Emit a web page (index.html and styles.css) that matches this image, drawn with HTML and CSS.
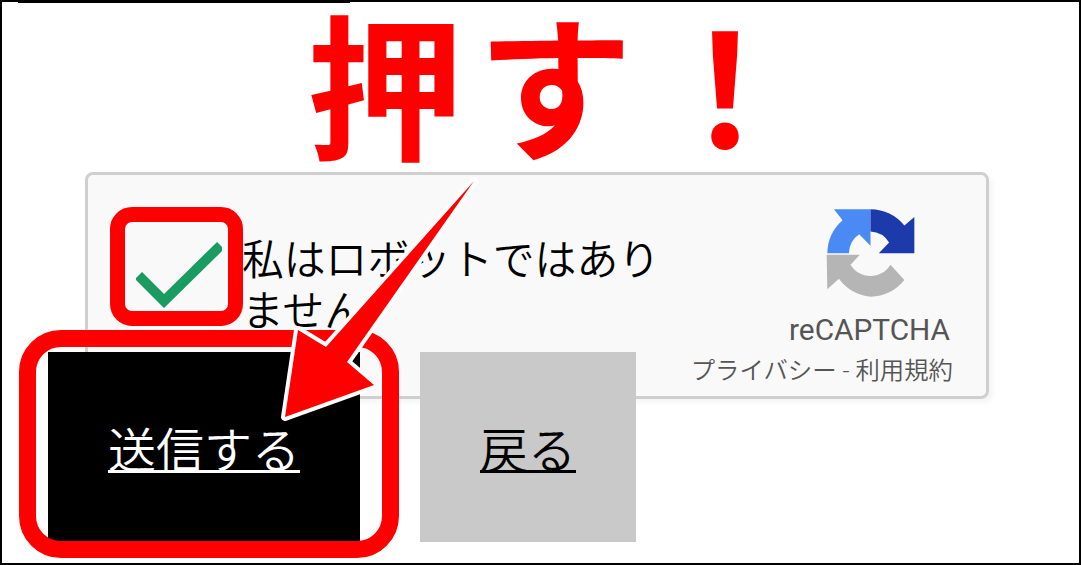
FILE: index.html
```html
<!DOCTYPE html>
<html lang="ja">
<head>
<meta charset="utf-8">
<title>reCAPTCHA</title>
<link rel="stylesheet" href="styles.css">
</head>
<body>
<main class="frame">
  <div class="top-rule"></div>
  <section class="card">
    <svg class="check" viewBox="0 0 86 68"><path d="M6 39 L28 61 L81 9" /></svg>
    <p class="label">私はロボットではありません</p>
    <div class="brand">
      <svg class="logo" viewBox="70 45 280 280">
        <path class="logo-blue" d="M80 187 A135 135 0 0 1 126 88 L100 55 L210 55 L210 165 L176 130 A70 70 0 0 0 145 187 Z"/>
        <path class="logo-navy" d="M210 55 A135 135 0 0 1 312 104 L342 78 L342 187 L235 187 L266 155 A70 70 0 0 0 210 122 Z"/>
        <path class="logo-gray" d="M78 192 L178 192 L150 222 A70 70 0 0 0 270 222 L312 268 A135 135 0 0 1 210 318 A135 135 0 0 1 115 264 L80 296 Z"/>
      </svg>
      <div class="brand-name">reCAPTCHA</div>
      <div class="brand-links">プライバシー - 利用規約</div>
    </div>
  </section>
  <div class="actions">
    <a class="btn btn-send" href="#">送信する</a>
    <a class="btn btn-back" href="#">戻る</a>
  </div>

  <div class="annotations">
    <div class="push">押す！</div>
    <div class="ring ring-check"></div>
    <div class="ring ring-send"></div>
    <svg class="arrow" viewBox="0 0 1081 565">
      <polygon points="474,181 347,362 374,385 285,417 298,330 326,347"/>
    </svg>
  </div>
</main>
</body>
</html>
```
FILE: styles.css
```css
* { box-sizing: border-box; }
html, body { margin: 0; padding: 0; background: #fff; }
body { width: 1081px; height: 565px; overflow: hidden; font-family: "Noto Sans CJK JP", "Noto Sans", sans-serif; }

.frame {
  position: relative;
  width: 1081px;
  height: 565px;
  border: 2px solid #000;
  background: #fff;
  overflow: hidden;
}

.top-rule { width: 332px; height: 1px; margin-left: 16px; background: #000; }

.card {
  display: flex;
  align-items: flex-start;
  width: 904px;
  height: 227px;
  margin: 169px 0 0 83px;
  border: 3px solid #cfcfcf;
  border-radius: 8px;
  background: #f9f9f9;
  box-shadow: 4px 4px 4px rgba(0, 0, 0, .04);
}

.check { flex: none; width: 86px; height: 68px; margin: 65px 0 0 48px; fill: none; stroke: #1a9b5f; stroke-width: 10; stroke-linecap: square; }

.label {
  flex: none;
  width: 430px;
  margin: 57px 0 0 20px;
  font-size: 41.8px;
  font-weight: 350;
  line-height: 51px;
  color: #000;
}

.brand {
  flex: 1;
  display: flex;
  flex-direction: column;
  align-items: flex-end;
  padding: 31px 33px 0 0;
  color: #555;
}
.logo { width: 93px; height: 93px; margin-right: 36px; filter: blur(.4px); }
.logo-blue { fill: #4a8af4; }
.logo-navy { fill: #1c3aa9; }
.logo-gray { fill: #b5b5b5; }
.brand-name { margin-top: 13px; margin-right: 3px; font: 400 29.8px/36px Roboto, sans-serif; }
.brand-links { margin-top: 6px; font: 350 24.4px/34px Roboto, "Noto Sans CJK JP", sans-serif; }

.actions { display: flex; gap: 60px; margin: -47px 0 0 46px; position: relative; }
.btn {
  display: flex;
  align-items: center;
  justify-content: center;
  height: 190px;
  font-size: 48px;
  font-weight: 350;
  text-decoration: underline;
  text-decoration-thickness: 3px;
}
.btn-send { width: 312px; background: #000; color: #fff; }
.btn-back { width: 216px; background: #c9c9c9; color: #000; }

.annotations { position: absolute; left: -2px; top: -2px; width: 1081px; height: 565px; pointer-events: none; }

.push {
  position: absolute;
  left: 307px;
  top: 16px;
  font-family: "Liberation Sans", "Noto Sans CJK JP", sans-serif;
  font-size: 156px;
  font-weight: 700;
  letter-spacing: 14px;
  line-height: 156px;
  white-space: nowrap;
  color: #f00;
  text-shadow: 0 0 4px #fff, 0 0 4px #fff;
}

.ring { position: absolute; border-style: solid; border-color: #f00; }
.ring-check { left: 110px; top: 207px; width: 133px; height: 119px; border-width: 15px; border-radius: 22px; }
.ring-send { left: 19px; top: 330px; width: 380px; height: 228px; border-width: 17px; border-radius: 42px; }

.arrow { position: absolute; left: 0; top: 0; width: 1081px; height: 565px; }
.arrow polygon { fill: #f00; stroke: #fff; stroke-width: 8; stroke-linejoin: round; paint-order: stroke; }
```
